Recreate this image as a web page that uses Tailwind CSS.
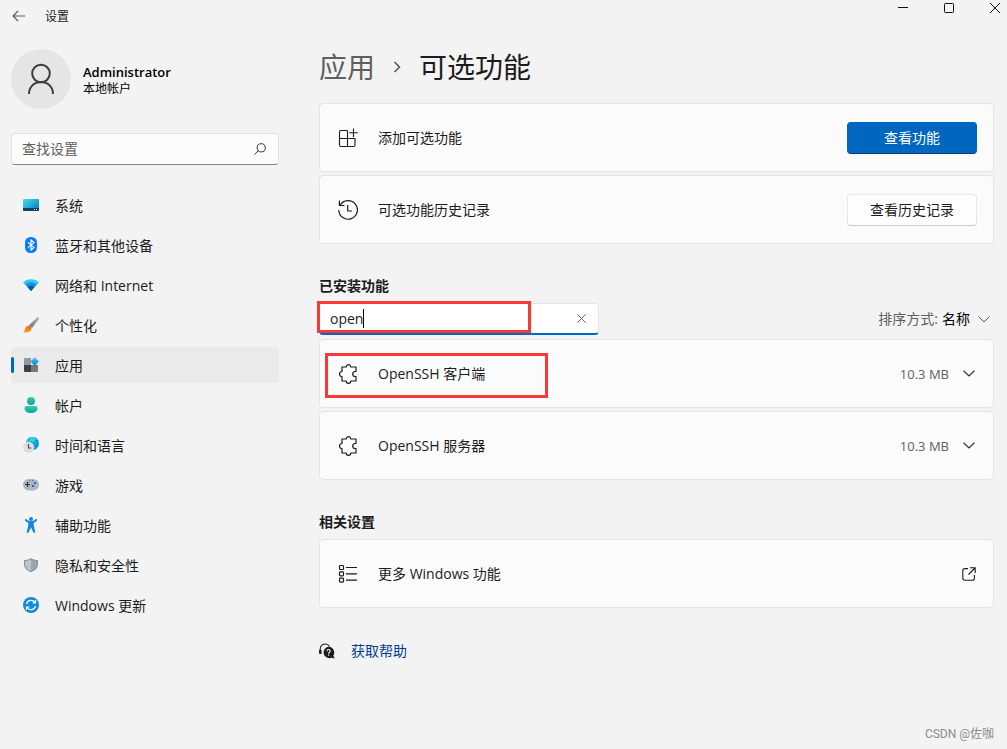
<!DOCTYPE html>
<html lang="zh-CN">
<head>
<meta charset="utf-8">
<meta name="viewport" content="width=device-width, initial-scale=1">
<title>设置</title>
<script src="https://cdn.jsdelivr.net/npm/@tailwindcss/browser@4"></script>
</head>
<body class="relative min-h-screen bg-[#f3f3f3] font-['Open_Sans','Noto_Sans_CJK_SC',sans-serif] text-sm leading-5 text-[#1b1b1b]">

<header class="flex h-8 items-center">
  <button type="button" aria-label="返回" class="ml-3 flex h-8 w-4 items-center">
    <svg class="h-3 w-[14px]" viewBox="0 0 14 12" fill="none" stroke="#5c5c5c" stroke-width="1.1"><path d="M1.2 6H13M6 1 1 6l5 5"/></svg>
  </button>
  <h1 class="ml-[17px] pt-px text-xs">设置</h1>
  <div class="ml-auto flex h-4 items-center gap-9 self-start pr-[7px]">
    <button type="button" aria-label="最小化" class="w-[10px]"><svg class="size-[10px]" viewBox="0 0 10 10" stroke="#111"><path d="M0 4.5h10"/></svg></button>
    <button type="button" aria-label="最大化" class="w-[10px]"><svg class="size-[10px]" viewBox="0 0 10 10" fill="none" stroke="#111"><rect x=".5" y=".5" width="9" height="9" rx=".8"/></svg></button>
    <button type="button" aria-label="关闭" class="w-[10px]"><svg class="size-[10px]" viewBox="0 0 10 10" stroke="#111"><path d="m0 0 10 10M10 0 0 10"/></svg></button>
  </div>
</header>

<div class="flex gap-10 pr-[13px] pl-[11px]">
  <aside class="w-[268px] shrink-0 pt-[17px]">
    <div class="flex items-center gap-3">
      <div class="flex size-[60px] items-center justify-center rounded-full bg-[#e5e5e5]">
        <svg class="size-8" viewBox="0 0 32 32" fill="none" stroke="#3c3c3c" stroke-width="2"><circle cx="16" cy="10.500" r="8.800"/><path d="M4 31c0-7 5-12 12-12s12 5 12 12"/></svg>
      </div>
      <div class="pt-[2px]">
        <p class="text-[13px] font-semibold leading-[18px] text-black">Administrator</p>
        <p class="text-xs leading-4 text-black">本地帐户</p>
      </div>
    </div>

    <label class="mt-6 flex h-8 items-center rounded border border-[#e2e2e2] border-b-[#868686] bg-[#fcfcfc] px-[10px]">
      <input type="search" aria-label="查找设置" placeholder="查找设置" class="min-w-0 flex-1 bg-transparent outline-none placeholder:text-[#606060]">
      <svg class="mr-[2px] size-3" viewBox="0 0 12 12" fill="none" stroke="#3a3a3a"><circle cx="7.200" cy="4.800" r="4.100"/><path d="M4.300 7.700.5 11.500"/></svg>
    </label>

    <nav class="mt-[22px] flex flex-col gap-1">
      <a href="#" class="flex h-9 items-center gap-4 rounded px-3">
        <svg class="size-4" viewBox="0 0 16 16"><defs><linearGradient id="sys" x1="0" y1="0" x2="1" y2="1"><stop stop-color="#43dfe8"/><stop offset="1" stop-color="#0b72c4"/></linearGradient></defs><rect y="2" width="16" height="12" rx="1" fill="url(#sys)"/><path d="M0 11h16v2a1 1 0 0 1-1 1H1a1 1 0 0 1-1-1z" fill="#10415f"/><path d="M11 12.500h1M13 12.500h1" stroke="#d5e5ee"/></svg>
        <span class="pt-[2px]">系统</span></a>
      <a href="#" class="flex h-9 items-center gap-4 rounded px-3">
        <svg class="size-4" viewBox="0 0 16 16"><rect x="2" width="12" height="16" rx="5.500" fill="#0a7cf7"/><path d="m5 5.300 6 5.100L8 13V3l3 2.600-6 5.100" fill="none" stroke="#fff" stroke-width="1.100"/></svg>
        <span class="pt-[2px]">蓝牙和其他设备</span></a>
      <a href="#" class="flex h-9 items-center gap-4 rounded px-3">
        <svg class="size-4" viewBox="0 0 16 16"><path d="M0 5.600C4 1.200 12 1.200 16 5.600L8 14z" fill="#35c9f5"/><path d="M2.400 7.600c3-3.200 8.200-3.200 11.200 0L8 14z" fill="#168fe0"/><path d="M4.700 10.200c1.700-2 4.900-2 6.600 0L8 14z" fill="#0a56a8"/></svg>
        <span class="pt-[2px]">网络和 Internet</span></a>
      <a href="#" class="flex h-9 items-center gap-4 rounded px-3">
        <svg class="size-4" viewBox="0 0 16 16"><defs><linearGradient id="br" x1="0" y1="1" x2="1" y2="0"><stop stop-color="#65717c"/><stop offset="1" stop-color="#b4bcc4"/></linearGradient><linearGradient id="tip" x1="0" y1="1" x2="1" y2="0"><stop stop-color="#fbb03b"/><stop offset="1" stop-color="#ee5c0c"/></linearGradient></defs><path d="M15.700.4c.7.700.3 1.600-.2 2.400L9 11 6 8.200 13.500.9c.8-.7 1.600-1.100 2.200-.5z" fill="url(#br)"/><path d="M5.600 8.700c1.500 0 2.900 1.200 2.800 2.800-.2 3.300-4.700 4.800-8.400 3.400 2-.7 1.500-2.200 2.300-4 .6-1.400 1.800-2.200 3.300-2.200z" fill="url(#tip)"/></svg>
        <span class="pt-[2px]">个性化</span></a>
      <a href="#" aria-current="page" class="relative flex h-9 items-center gap-4 rounded bg-[#eaeaea] px-3">
        <i class="absolute top-[10px] left-0 h-4 w-[3px] rounded-full bg-[#0067c0]"></i>
        <svg class="size-4" viewBox="0 0 16 16"><defs><linearGradient id="dia" x1="0" y1="0" x2="1" y2="1"><stop stop-color="#41d2f2"/><stop offset="1" stop-color="#0878d4"/></linearGradient></defs><path d="M1 2a1 1 0 0 1 1-1h6v7H1z" fill="#9399a0"/><path d="M1 8h7v7H2a1 1 0 0 1-1-1z" fill="#3b4044"/><path d="M8 8h7v6a1 1 0 0 1-1 1H8z" fill="#717880"/><rect x="8.700" y="1.500" width="6" height="6" rx=".8" transform="rotate(45 11.700 4.500)" fill="url(#dia)"/></svg>
        <span class="pt-[2px]">应用</span></a>
      <a href="#" class="flex h-9 items-center gap-4 rounded px-3">
        <svg class="size-4" viewBox="0 0 16 16"><defs><linearGradient id="acc" x1="0" y1="0" x2="0" y2="1"><stop stop-color="#2bd0b5"/><stop offset="1" stop-color="#12a58f"/></linearGradient></defs><circle cx="8" cy="4" r="4" fill="url(#acc)"/><path d="M3.500 9h9A2 2 0 0 1 14.500 11c0 3-2.500 5-6.500 5s-6.500-2-6.500-5a2 2 0 0 1 2-2z" fill="url(#acc)"/></svg>
        <span class="pt-[2px]">帐户</span></a>
      <a href="#" class="flex h-9 items-center gap-4 rounded px-3">
        <svg class="size-4" viewBox="0 0 16 16"><circle cx="9.500" cy="6.500" r="6.500" fill="#14a9e3"/><path d="M9.500 0a6.500 6.500 0 0 0-6.200 4.500h12.400A6.500 6.500 0 0 0 9.500 0z" fill="#35cfe0"/><path d="M12 3.500h3.300M12 9h3.500M12.500.8c2 3.500 2 8 0 11.500M7 .6c-1 1-1.500 2-1.700 3" fill="none" stroke="#0876bb" stroke-width=".7"/><circle cx="5.500" cy="10.300" r="5.500" fill="#dcdddf"/><path d="M5.500 7v4h2.700" fill="none" stroke="#4a4a4a" stroke-width="1.100"/></svg>
        <span class="pt-[2px]">时间和语言</span></a>
      <a href="#" class="flex h-9 items-center gap-4 rounded px-3">
        <svg class="size-4" viewBox="0 0 16 16"><rect y="2" width="16" height="11.500" rx="5.700" fill="#adb5bd"/><path d="M2 7.500h5M4.500 5v5" stroke="#30363b" stroke-width="1.200"/><path d="M6 3.500h1M9 3.500h1" stroke="#59636b"/><path d="M11 5h2v2h-2zM9 8h2v2H9z" fill="#0f73c9"/></svg>
        <span class="pt-[2px]">游戏</span></a>
      <a href="#" class="flex h-9 items-center gap-4 rounded px-3">
        <svg class="size-4" viewBox="0 0 16 16" fill="#1688dc"><circle cx="8" cy="2" r="2"/><path d="M2.400 2.100c.6-.4 1 0 1.400.4C5 3.600 6.300 4.200 8 4.200s3-.6 4.200-1.700c.4-.4.800-.8 1.400-.4.700.5.500 1.200.1 1.600-.8.900-1.800 1.600-2.900 2v3.100l1.400 5.800c.3 1.300-1.300 1.900-1.900.6L8 10.500l-2.300 4.700c-.6 1.300-2.200.7-1.900-.6l1.400-5.800V5.700c-1.100-.4-2.100-1.100-2.900-2-.4-.4-.6-1.100.1-1.600z"/></svg>
        <span class="pt-[2px]">辅助功能</span></a>
      <a href="#" class="flex h-9 items-center gap-4 rounded px-3">
        <svg class="size-4" viewBox="0 0 16 16"><path d="M8 1c2 1.500 4.200 2 7 2v4c0 4-2.800 6.700-7 8.200C3.800 13.700 1 11 1 7V3c2.800 0 5-.5 7-2z" fill="#8b9299"/><path d="M8 2.300V14C4.500 12.700 2 10.300 2 7V3.900c2.400 0 4.300-.5 6-1.600z" fill="#bfc4c9"/><path d="M8 2.300V14c3.500-1.300 6-3.700 6-7V3.900c-2.400 0-4.300-.5-6-1.600z" fill="#9ea5ab"/></svg>
        <span class="pt-[2px]">隐私和安全性</span></a>
      <a href="#" class="flex h-9 items-center gap-4 rounded px-3">
        <svg class="size-4" viewBox="0 0 16 16"><circle cx="8" cy="8" r="8" fill="#118bdc"/><path d="M3.500 7A4.700 4.700 0 0 1 12 5.500M12.500 9A4.700 4.700 0 0 1 4 10.500M12.500 3v3h-3M3.500 13v-3h3" fill="none" stroke="#fff" stroke-width="1.200"/></svg>
        <span class="pt-[2px]">Windows 更新</span></a>
    </nav>
  </aside>

  <main class="min-w-0 flex-1 pt-[15px]">
    <h2 class="flex items-center text-[28px] leading-10">
      <a href="#" class="text-[#5f5f5f]">应用</a>
      <svg class="mx-[18px] h-3 w-2" viewBox="0 0 8 12" fill="none" stroke="#555" stroke-width="1.500"><path d="m1.500 1 5 5-5 5"/></svg>
      <span>可选功能</span>
    </h2>

    <div class="mt-4 flex flex-col gap-[3px]">
      <section class="flex h-[69px] items-center rounded border border-[#e5e5e5] bg-[#fbfbfb] px-4">
        <svg class="ml-[2px] size-5" viewBox="0 0 20 20" fill="none" stroke="#1b1b1b" stroke-width="1.100"><path d="M9.500 2.500H3A1.500 1.500 0 0 0 1.500 4v13A1.500 1.500 0 0 0 3 18.500h12.500A1.500 1.500 0 0 0 17 17v-6.500H1.500M9.500 2.500v16M15.500.5v8.500M11.200 4.700h8.500"/></svg>
        <span class="ml-5 flex-1">添加可选功能</span>
        <button type="button" class="h-8 w-[130px] rounded border border-[#0067c0] border-b-[#003e73] bg-[#0067c0] text-white">查看功能</button>
      </section>
      <section class="flex h-[69px] items-center rounded border border-[#e5e5e5] bg-[#fbfbfb] px-4">
        <svg class="ml-[2px] size-5" viewBox="0 0 20 20" fill="none" stroke="#1b1b1b" stroke-width="1.200"><path d="M2.200 5A9.300 9.300 0 1 1 .8 10M1.400.5v5h5M9.700 5v6h4.300"/></svg>
        <span class="ml-5 flex-1">可选功能历史记录</span>
        <button type="button" class="h-8 w-[130px] rounded border border-[#e7e7e7] border-b-[#cccccc] bg-[#fefefe]">查看历史记录</button>
      </section>
    </div>

    <h3 class="mt-8 font-semibold">已安装功能</h3>
    <div class="mt-[7px] flex h-8 items-center justify-between">
      <div class="relative flex h-8 w-[280px] items-center rounded border border-[#e5e5e5] border-b-2 border-b-[#0067c0] bg-white pr-3 pl-[10px]">
        <input type="text" aria-label="搜索已安装功能" value="open" class="min-w-0 flex-1 bg-transparent outline-none">
        <i class="absolute top-[5px] left-[43px] h-[19px] w-px bg-black"></i>
        <button type="button" aria-label="清除"><svg class="size-[9px]" viewBox="0 0 9 9" stroke="#5f5f5f"><path d="m.3.3 8.400 8.400M8.700.3.300 8.700"/></svg></button>
        <div class="pointer-events-none absolute -top-[3px] -left-[3px] h-8 w-[214px] border-3 border-[#fb3838]"></div>
      </div>
      <label class="relative flex items-center gap-1 text-[#606060]">排序方式:
        <select class="w-[52px] appearance-none bg-transparent text-black"><option>名称</option></select>
        <svg class="pointer-events-none absolute right-1 h-[7px] w-3" viewBox="0 0 12 7" fill="none" stroke="#555"><path d="m.5.500 5.500 5.500L11.500.5"/></svg>
      </label>
    </div>

    <div class="mt-1 flex flex-col gap-[3px]">
      <section class="relative flex h-[69px] items-center rounded border border-[#e5e5e5] bg-[#fbfbfb] px-4">
        <svg class="ml-[2px] size-5" viewBox="0 0 20 20" fill="none" stroke="#1b1b1b" stroke-width="1.200" stroke-linejoin="round"><path d="M4 3H8.200a2.300 2.300 0 0 1 4.600 0H18V7.500H17.200a2.500 2.500 0 0 0 0 5H18V17H12.800a2.300 2.300 0 0 1-4.600 0H4V12.500a2.500 2.500 0 0 1 0-5z"/></svg>
        <span class="ml-5 flex-1">OpenSSH 客户端</span>
        <span class="text-[13px] text-[#606060]">10.3 MB</span>
        <button type="button" aria-label="展开 OpenSSH 客户端" class="mr-[2px] ml-[14px]"><svg class="h-[7px] w-3" viewBox="0 0 12 7" fill="none" stroke="#333" stroke-width="1.200"><path d="M.6.700 6 6l5.400-5.300"/></svg></button>
        <div class="pointer-events-none absolute top-[13px] left-[5px] h-[45px] w-[223px] border-3 border-[#fb3838]"></div>
      </section>
      <section class="flex h-[69px] items-center rounded border border-[#e5e5e5] bg-[#fbfbfb] px-4">
        <svg class="ml-[2px] size-5" viewBox="0 0 20 20" fill="none" stroke="#1b1b1b" stroke-width="1.200" stroke-linejoin="round"><path d="M4 3H8.200a2.300 2.300 0 0 1 4.600 0H18V7.500H17.200a2.500 2.500 0 0 0 0 5H18V17H12.800a2.300 2.300 0 0 1-4.600 0H4V12.500a2.500 2.500 0 0 1 0-5z"/></svg>
        <span class="ml-5 flex-1">OpenSSH 服务器</span>
        <span class="text-[13px] text-[#606060]">10.3 MB</span>
        <button type="button" aria-label="展开 OpenSSH 服务器" class="mr-[2px] ml-[14px]"><svg class="h-[7px] w-3" viewBox="0 0 12 7" fill="none" stroke="#333" stroke-width="1.200"><path d="M.6.700 6 6l5.400-5.300"/></svg></button>
      </section>
    </div>

    <h3 class="mt-8 font-semibold">相关设置</h3>
    <a href="#" class="mt-[7px] flex h-[69px] items-center rounded border border-[#e5e5e5] bg-[#fbfbfb] px-4">
      <svg class="ml-[2px] size-5" viewBox="0 0 20 20" fill="none" stroke="#1b1b1b" stroke-width="1.200"><rect x="1.500" y="1.500" width="4" height="4" rx=".8"/><rect x="1.500" y="7.800" width="4" height="4" rx=".8"/><rect x="1.500" y="14.100" width="4" height="4" rx=".8"/><path d="M8 3.500h11M8 9.800h11M8 16.100h11"/></svg>
      <span class="ml-5 flex-1">更多 Windows 功能</span>
      <svg class="mr-px size-[14px]" viewBox="0 0 14 14" fill="none" stroke="#1b1b1b" stroke-width="1.100"><path d="M6 1.600H2.800A2 2 0 0 0 .8 3.600v7.600a2 2 0 0 0 2 2h7.600a2 2 0 0 0 2-2V8M8 .8h5.200V6M13 1 6.500 7.500"/></svg>
    </a>

    <a href="#" class="mt-[33px] flex items-center gap-4 text-[#003e92]">
      <svg class="size-4" viewBox="0 0 16 16"><path d="M1.200 8.500V6a5 5 0 0 1 9.300-2.500" fill="none" stroke="#1b1b1b" stroke-width="1.100"/><path d="M0 7h2.500v4H1.200A1.200 1.200 0 0 1 0 9.800z" fill="#1b1b1b"/><path d="M9.500 3.800a5.700 5.700 0 0 1 4.800 8.800l1.400 3-3.200-.9A5.700 5.700 0 1 1 9.500 3.800z" fill="#1b1b1b"/><path d="M7.900 8.200c0-2.200 3.300-2.200 3.300-.2 0 1.300-1.600 1.300-1.600 2.700M9.600 11.500v1.200" fill="none" stroke="#fff" stroke-width="1.100"/></svg>
      <span>获取帮助</span>
    </a>
  </main>
</div>

<p class="absolute right-[13px] bottom-[7px] font-[Roboto,'Noto_Sans_CJK_SC',sans-serif] text-xs leading-4 text-[#8c8c8c]">CSDN @佐咖</p>
</body>
</html>
